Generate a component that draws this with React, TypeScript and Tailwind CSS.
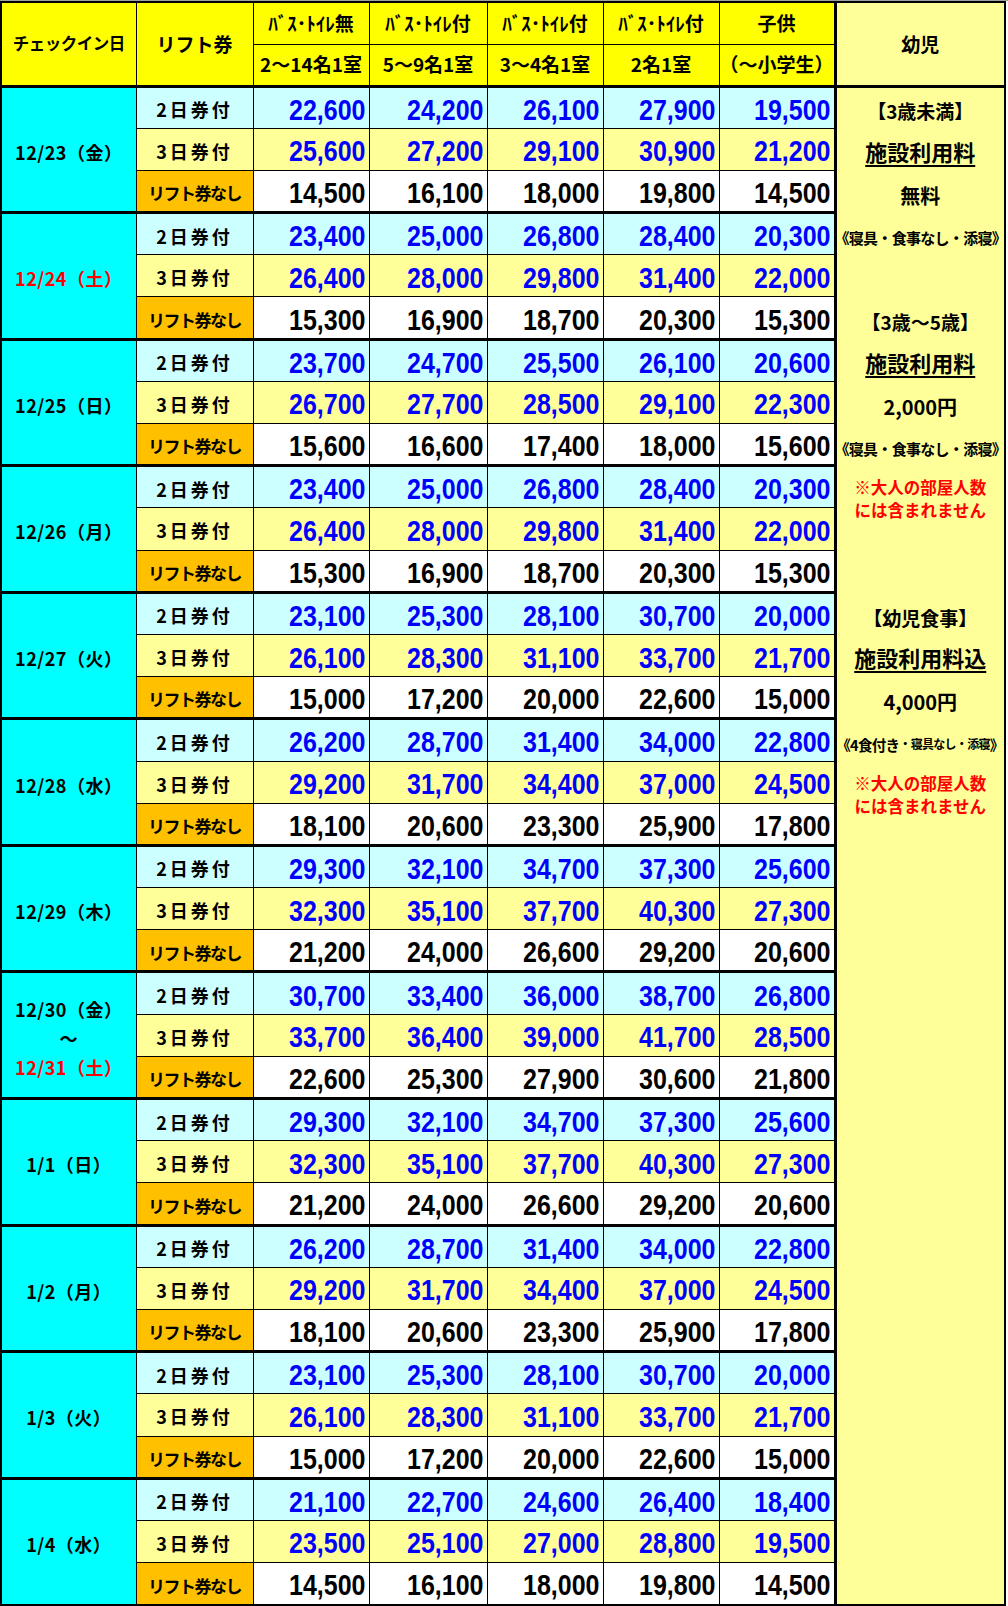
import type { ReactNode } from "react";

type Group = {
  date: ReactNode;
  rows: [string[], string[], string[]];
};

const red = "text-[#ff0000]";

const groups: Group[] = [
  {
    date: "12/23（金）",
    rows: [
      ["22,600", "24,200", "26,100", "27,900", "19,500"],
      ["25,600", "27,200", "29,100", "30,900", "21,200"],
      ["14,500", "16,100", "18,000", "19,800", "14,500"],
    ],
  },
  {
    date: <span className={red}>12/24（土）</span>,
    rows: [
      ["23,400", "25,000", "26,800", "28,400", "20,300"],
      ["26,400", "28,000", "29,800", "31,400", "22,000"],
      ["15,300", "16,900", "18,700", "20,300", "15,300"],
    ],
  },
  {
    date: "12/25（日）",
    rows: [
      ["23,700", "24,700", "25,500", "26,100", "20,600"],
      ["26,700", "27,700", "28,500", "29,100", "22,300"],
      ["15,600", "16,600", "17,400", "18,000", "15,600"],
    ],
  },
  {
    date: "12/26（月）",
    rows: [
      ["23,400", "25,000", "26,800", "28,400", "20,300"],
      ["26,400", "28,000", "29,800", "31,400", "22,000"],
      ["15,300", "16,900", "18,700", "20,300", "15,300"],
    ],
  },
  {
    date: "12/27（火）",
    rows: [
      ["23,100", "25,300", "28,100", "30,700", "20,000"],
      ["26,100", "28,300", "31,100", "33,700", "21,700"],
      ["15,000", "17,200", "20,000", "22,600", "15,000"],
    ],
  },
  {
    date: "12/28（水）",
    rows: [
      ["26,200", "28,700", "31,400", "34,000", "22,800"],
      ["29,200", "31,700", "34,400", "37,000", "24,500"],
      ["18,100", "20,600", "23,300", "25,900", "17,800"],
    ],
  },
  {
    date: "12/29（木）",
    rows: [
      ["29,300", "32,100", "34,700", "37,300", "25,600"],
      ["32,300", "35,100", "37,700", "40,300", "27,300"],
      ["21,200", "24,000", "26,600", "29,200", "20,600"],
    ],
  },
  {
    date: (
      <div className="flex flex-col items-center leading-[29px]">
        <span>12/30（金）</span>
        <span>～</span>
        <span className={red}>12/31（土）</span>
      </div>
    ),
    rows: [
      ["30,700", "33,400", "36,000", "38,700", "26,800"],
      ["33,700", "36,400", "39,000", "41,700", "28,500"],
      ["22,600", "25,300", "27,900", "30,600", "21,800"],
    ],
  },
  {
    date: "1/1（日）",
    rows: [
      ["29,300", "32,100", "34,700", "37,300", "25,600"],
      ["32,300", "35,100", "37,700", "40,300", "27,300"],
      ["21,200", "24,000", "26,600", "29,200", "20,600"],
    ],
  },
  {
    date: "1/2（月）",
    rows: [
      ["26,200", "28,700", "31,400", "34,000", "22,800"],
      ["29,200", "31,700", "34,400", "37,000", "24,500"],
      ["18,100", "20,600", "23,300", "25,900", "17,800"],
    ],
  },
  {
    date: "1/3（火）",
    rows: [
      ["23,100", "25,300", "28,100", "30,700", "20,000"],
      ["26,100", "28,300", "31,100", "33,700", "21,700"],
      ["15,000", "17,200", "20,000", "22,600", "15,000"],
    ],
  },
  {
    date: "1/4（水）",
    rows: [
      ["21,100", "22,700", "24,600", "26,400", "18,400"],
      ["23,500", "25,100", "27,000", "28,800", "19,500"],
      ["14,500", "16,100", "18,000", "19,800", "14,500"],
    ],
  },
];

const labels = [
  { text: "2日券付", bg: "bg-[#ccffff]", type: "text-[18px] tracking-[3px]" },
  { text: "3日券付", bg: "bg-[#ffff99]", type: "text-[18px] tracking-[3px]" },
  { text: "リフト券なし", bg: "bg-[#ffc000]", type: "text-[17px] tracking-[-1.5px]" },
];

const priceBg = ["bg-[#ccffff]", "bg-[#ffff99]", "bg-white"];
const priceColor = ["text-[#0000ff]", "text-[#0000ff]", "text-black"];

const Slot = ({ children, lift }: { children?: ReactNode; lift?: boolean }) => (
  <div className={`h-[42.2px] flex items-center justify-center whitespace-nowrap ${lift ? "pt-[1px]" : "pt-[6px]"}`}>
    {children}
  </div>
);

const Note = () => (
  <div className="h-[84.4px] flex flex-col items-center pt-[9px] leading-[23px] text-[16.5px] text-[#ff0000] whitespace-nowrap">
    <span>※大人の部屋人数</span>
    <span>には含まれません</span>
  </div>
);

const under = "underline underline-offset-[4px] decoration-[1.5px] text-[22px]";

const InfantColumn = () => (
  <div className="flex flex-col">
    <Slot><span className="text-[19px]">【3歳未満】</span></Slot>
    <Slot lift><span className={under}>施設利用料</span></Slot>
    <Slot><span className="text-[20px]">無料</span></Slot>
    <Slot><span className="text-[15px] tracking-[-0.7px]">《寝具・食事なし・添寝》</span></Slot>
    <Slot />
    <Slot><span className="text-[19px]">【3歳～5歳】</span></Slot>
    <Slot lift><span className={under}>施設利用料</span></Slot>
    <Slot><span className="text-[20px]">2,000円</span></Slot>
    <Slot><span className="text-[15px] tracking-[-0.7px]">《寝具・食事なし・添寝》</span></Slot>
    <Note />
    <Slot />
    <Slot><span className="text-[19px]">【幼児食事】</span></Slot>
    <Slot lift><span className={under}>施設利用料込</span></Slot>
    <Slot><span className="text-[20px]">4,000円</span></Slot>
    <Slot>
      <span className="text-[14.5px] tracking-[-0.7px]">《4食付き</span>
      <span className="text-[12px] tracking-[-0.7px]">・寝具なし・添寝</span>
      <span className="text-[14.5px]">》</span>
    </Slot>
    <Note />
  </div>
);

export default function App() {
  const base = "border border-black bg-[#ffff00] font-bold text-center align-middle p-0 whitespace-nowrap";
  const th = `${base} text-[19px]`;
  return (
    <div className="bg-white min-h-screen border-t border-[#a0a0a0]">
      <table className="w-[1004px] table-fixed border-collapse border-2 border-black font-['Noto_Sans_CJK_JP',sans-serif] font-bold text-black">
        <colgroup>
          <col className="w-[135px]" />
          <col className="w-[117px]" />
          <col className="w-[116px]" />
          <col className="w-[118px]" />
          <col className="w-[116px]" />
          <col className="w-[116px]" />
          <col className="w-[116px]" />
          <col className="w-[170px]" />
        </colgroup>
        <thead>
          <tr className="h-[42px]">
            <th rowSpan={2} className={`${base} border-b-[3px] text-[16.5px] tracking-[-0.5px]`}>チェックイン日</th>
            <th rowSpan={2} className={`${th} border-b-[3px]`}>リフト券</th>
            <th className={th}>ﾊﾞｽ･ﾄｲﾚ無</th>
            <th className={th}>ﾊﾞｽ･ﾄｲﾚ付</th>
            <th className={th}>ﾊﾞｽ･ﾄｲﾚ付</th>
            <th className={th}>ﾊﾞｽ･ﾄｲﾚ付</th>
            <th className={th}>子供</th>
            <th rowSpan={2} className={`${th} border-b-[3px] border-l-[3px] bg-[#ffff99]`}>幼児</th>
          </tr>
          <tr className="h-[42px]">
            <th className={`${th} border-b-[3px]`}>2～14名1室</th>
            <th className={`${th} border-b-[3px]`}>5～9名1室</th>
            <th className={`${th} border-b-[3px]`}>3～4名1室</th>
            <th className={`${th} border-b-[3px]`}>2名1室</th>
            <th className={`${th} border-b-[3px]`}>（～小学生）</th>
          </tr>
        </thead>
        <tbody>
          {groups.map((g, gi) =>
            g.rows.map((row, ri) => {
              const top = ri === 0 ? "border-t-[3px]" : "";
              return (
                <tr key={`${gi}-${ri}`} className="h-[42.2px]">
                  {ri === 0 && (
                    <td
                      rowSpan={3}
                      className="border border-black border-t-[3px] bg-[#00ffff] text-center align-middle text-[18px] tracking-[0.5px] pt-[6px] whitespace-nowrap"
                    >
                      {g.date}
                    </td>
                  )}
                  <td
                    className={`border border-black ${top} ${labels[ri].bg} ${labels[ri].type} text-center align-middle pt-[4px] whitespace-nowrap`}
                  >
                    {labels[ri].text}
                  </td>
                  {row.map((v, ci) => (
                    <td
                      key={ci}
                      className={`border border-black ${top} ${priceBg[ri]} ${priceColor[ri]} text-right align-middle pr-[3px] pt-[5px] font-['Liberation_Sans',Arial,sans-serif] text-[25px] leading-none`}
                    >
                      <span className="inline-block scale-y-[1.15]">{v}</span>
                    </td>
                  ))}
                  {gi === 0 && ri === 0 && (
                    <td rowSpan={36} className="border border-black border-l-[3px] border-t-[3px] bg-[#ffff99] align-top p-0">
                      <InfantColumn />
                    </td>
                  )}
                </tr>
              );
            })
          )}
        </tbody>
      </table>
    </div>
  );
}
